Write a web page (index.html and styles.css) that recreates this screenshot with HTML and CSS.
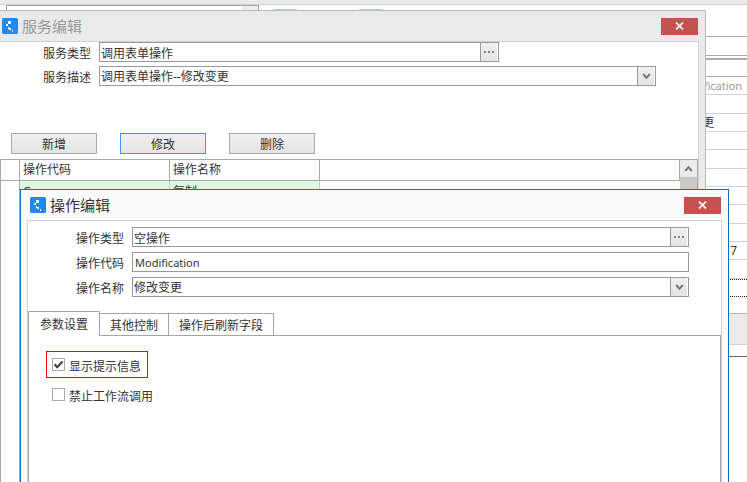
FILE: index.html
```html
<!DOCTYPE html>
<html lang="zh-CN">
<head>
<meta charset="utf-8">
<title>操作编辑</title>
<link rel="stylesheet" href="styles.css">
</head>
<body>
<svg class="defs" aria-hidden="true">
  <symbol id="app" viewBox="0 0 16 16">
    <rect width="16" height="16" rx="1.5" fill="#2488f0"/>
    <path fill="#fff" d="M6 3h3v3H6zM4 6h2v2H4zM6 9h1v1h2v2H7v-1H6zM10 12h1v2h-1z"/>
  </symbol>
  <symbol id="close" viewBox="0 0 9 8">
    <path d="M1 .5 8 7.500M8 .5 1 7.500" fill="none" stroke="#f6eaea" stroke-width="1.800"/>
  </symbol>
  <symbol id="down" viewBox="0 0 9 7">
    <path d="M1.200 1 4.500 4.800 7.800 1" fill="none" stroke="#777" stroke-width="2"/>
  </symbol>
  <symbol id="dots" viewBox="0 0 10 2">
    <path fill="#858585" d="M0 0h2v2H0zM4 0h2v2H4zM8 0h2v2H8z"/>
  </symbol>
</svg>

<main class="desk">
  <div class="toolbar"></div>
  <div class="toolrow"><span class="box"></span><span class="stub"></span><span class="stub second"></span></div>
  <div class="sheet">
    <div class="line head"></div>
    <div class="line panel"></div>
    <div class="line gap"></div>
    <div class="line strong"></div>
    <div class="line muted">Modification</div>
    <div class="line"></div>
    <div class="line name">修改变更</div>
    <div class="line"></div>
    <div class="line"></div>
    <div class="line"></div>
    <div class="line"></div>
    <div class="line"></div>
    <div class="line"></div>
    <div class="line value">7</div>
    <div class="line"></div>
    <div class="line dotted"></div>
    <div class="line blank"></div>
    <div class="line bar"></div>
    <div class="line end"></div>
  </div>
</main>

<section class="window service" aria-labelledby="service-title">
  <header class="titlebar">
    <svg class="logo" aria-hidden="true"><use href="#app"/></svg>
    <h2 class="title" id="service-title">服务编辑</h2>
    <button class="close" aria-label="关闭"><svg><use href="#close"/></svg></button>
  </header>
  <div class="body">
    <div class="form">
      <label class="label" for="stype">服务类型</label>
      <div class="field short"><input id="stype" value="调用表单操作"><button class="end-button" aria-label="浏览"><svg class="dots"><use href="#dots"/></svg></button></div>
      <label class="label" for="sdesc">服务描述</label>
      <div class="field"><select id="sdesc"><option>调用表单操作--修改变更</option></select><span class="end-button over"><svg class="down"><use href="#down"/></svg></span></div>
    </div>
    <div class="actions">
      <button class="button">新增</button>
      <button class="button focus">修改</button>
      <button class="button">删除</button>
    </div>
    <div class="grid">
      <table class="table">
        <thead><tr><th class="mark"></th><th class="col">操作代码</th><th class="col">操作名称</th><th></th></tr></thead>
        <tbody>
          <tr class="row"><td></td><td class="green">Copy</td><td class="green">复制</td><td></td></tr>
          <tr><td></td><td></td><td></td><td></td></tr>
        </tbody>
      </table>
      <div class="scroll"><button class="up" aria-label="向上"><svg class="down"><use href="#down"/></svg></button><div class="thumb"></div></div>
    </div>
  </div>
</section>

<section class="window dialog" aria-labelledby="dialog-title">
  <header class="titlebar">
    <svg class="logo" aria-hidden="true"><use href="#app"/></svg>
    <h2 class="title" id="dialog-title">操作编辑</h2>
    <button class="close" aria-label="关闭"><svg><use href="#close"/></svg></button>
  </header>
  <div class="body">
    <div class="form">
      <label class="label" for="otype">操作类型</label>
      <div class="field"><input id="otype" value="空操作"><button class="end-button" aria-label="浏览"><svg class="dots"><use href="#dots"/></svg></button></div>
      <label class="label" for="ocode">操作代码</label>
      <div class="field"><input id="ocode" class="code" value="Modification"></div>
      <label class="label" for="oname">操作名称</label>
      <div class="field"><select id="oname"><option>修改变更</option></select><span class="end-button over"><svg class="down"><use href="#down"/></svg></span></div>
    </div>
    <div class="tabs" role="tablist">
      <button class="tab active" role="tab" aria-selected="true">参数设置</button>
      <button class="tab" role="tab">其他控制</button>
      <button class="tab" role="tab">操作后刷新字段</button>
    </div>
    <div class="pane" role="tabpanel">
      <label class="check marked"><input type="checkbox" checked><svg class="tick" viewBox="0 0 13 13" aria-hidden="true"><path d="M2.500 6.200 5.200 9.200 10.500 3.500" fill="none" stroke="#444" stroke-width="2.200"/></svg><span>显示提示信息</span></label>
      <label class="check"><input type="checkbox"><span>禁止工作流调用</span></label>
    </div>
  </div>
</section>
</body>
</html>
```

FILE: styles.css
```css
* { box-sizing: border-box; }

body {
  margin: 0;
  height: 100vh;
  overflow: hidden;
  position: relative;
  background: #fff;
  color: #333;
  font: 12px/18px "Noto Sans", "Noto Sans CJK SC", sans-serif;
}

button, input, select {
  margin: 0;
  padding: 0;
  border: 0;
  border-radius: 0;
  font-family: inherit;
  font-size: 12px;
  color: inherit;
  background: none;
}

svg { display: block; }
.defs { position: absolute; width: 0; height: 0; }

/* Main window behind the dialogs */
.toolbar { height: 5px; background: #eaeaea; border-bottom: 1px solid #d2d2d2; }
.toolrow { display: flex; height: 31px; padding-left: 6px; }
.box { width: 253px; border: 1px solid #a5a5a5; border-right-width: 1px; background: linear-gradient(#eee, #eee) right / 17px 100% no-repeat; }
.stub { width: 24px; height: 5px; margin-left: 14px; border-bottom: 1px solid #b4cdda; }
.stub.second { margin-left: 62px; }
.sheet { display: flex; flex-direction: column; }
.line {
  height: 18px;
  padding-right: 5px;
  border-bottom: 1px solid #d2d2d2;
  line-height: 18px;
  text-align: right;
}
.line:nth-child(3n) { height: 19px; }
.line.head { height: 1px; border-color: #aaa; }
.line.panel { height: 19px; border-color: #aaa; }
.line.gap { height: 4px; border-bottom: 2px solid #aaa; }
.line.strong { height: 17px; border-color: #aaa; }
.line.muted { height: 18px; color: #999; font-size: 11px; }
.line.name { padding-right: 33px; }
.line.value { padding-right: 10px; }
.line.dotted { border-bottom: 1px dotted #222; height: 1px; }
.line.blank { height: 17px; border-bottom: 1px dotted #222; }
.line.bar { height: 48px; border-top: 16px solid #fff; background: #eaeaea; box-shadow: inset 0 1px #bbb; }
.line.end { height: 12px; border-color: #666; }

/* Windows */
.window { position: absolute; bottom: 0; display: flex; flex-direction: column; }
.titlebar { display: flex; align-items: center; gap: 4px; height: 30px; }
.logo { width: 16px; height: 16px; }
.title { flex: 1; margin: 0; font-size: 15px; line-height: 20px; font-weight: 400; }
.close {
  display: flex;
  align-items: center;
  justify-content: center;
  width: 37px;
  height: 17px;
  background: #c75050;
}
.close svg { width: 9px; height: 8px; }
.body { flex: 1; display: flex; flex-direction: column; background: #fff; border: 1px solid #d2d2d2; border-bottom: 0; }

.service { top: 10px; left: 0; right: 41px; background: #eaeaea; border: 1px solid #bbb; border-width: 1px 1px 0 0; padding-right: 6px; }
.service .titlebar { padding: 0 1px 0 2px; }
.service .title { color: #999; }
.service .body { border-left: 0; }

.dialog { top: 189px; left: 20px; right: 18px; background: #fafafa; border: 1px solid #0a70be; border-bottom: 0; padding: 0 6px; }
.dialog .titlebar { padding-left: 3px; padding-right: 1px; }

/* Form rows */
.form { display: grid; align-items: center; column-gap: 8px; }
.service .form { grid-template-columns: 91px 1fr; row-gap: 4px; padding-right: 42px; }
.dialog .form { grid-template-columns: 96px 1fr; row-gap: 5px; padding: 6px 32px 0 0; }
.label { text-align: right; padding-top: 4px; line-height: 16px; }
.field {
  display: grid;
  grid-template-columns: 1fr 18px;
  height: 20px;
  border: 1px solid #999;
}
.field.short { margin-right: 157px; }
.field input, .field select {
  grid-area: 1 / 1;
  min-width: 0;
  width: 100%;
  height: 18px;
  padding-left: 1px;
  padding-top: 1px;
  appearance: none;
  outline: 0;
}
.field select, .field .code { grid-column: 1 / 3; }
.field .code { font-size: 11px; padding-left: 2px; }
.end-button {
  grid-area: 1 / 2;
  display: flex;
  align-items: center;
  justify-content: center;
  margin-right: 1px;
  border-left: 1px solid #999;
  background: linear-gradient(#f0f0f0, #e4e4e4);
}
.over { pointer-events: none; }
.dots { width: 10px; height: 2px; }
.down { width: 9px; height: 7px; }

/* Action buttons */
.actions { display: flex; gap: 23px; padding: 47px 11px 5px; }
.button {
  width: 86px;
  height: 21px;
  border: 1px solid #aaa;
  background: linear-gradient(#f0f0f0, #e4e4e4);
}
.focus { border-color: #3c96f5; }

/* Operations list */
.grid { flex: 1; display: flex; border: 1px solid #a9a9a9; border-width: 1px 1px 0; }
.table { flex: 1; height: 100%; border-collapse: separate; border-spacing: 0; table-layout: fixed; }
.table th, .table td { padding: 0 3px; text-align: left; font-weight: 400; border-right: 1px solid #a9a9a9; }
.table th { height: 21px; border-bottom: 1px solid #a9a9a9; }
.table .mark { width: 19px; }
.col { width: 150px; }
.row { height: 21px; }
.table .green { background: #dcfae3; border-right-color: #c9c9c9; }
.table td:last-child { border-right: 0; }
.scroll { width: 17px; background: #eaeaea; }
.up { display: flex; align-items: center; justify-content: center; width: 100%; height: 17px; transform: rotate(180deg); }
.thumb { height: 60px; background: #c9c9c9; }

/* Tabs */
.tabs { display: flex; align-items: flex-start; height: 24px; margin-top: 14px; }
.tab { height: 23px; margin-top: 2px; padding: 0 10px; border: 1px solid #a5a5a5; border-left: 0; background: #fff; }
.tab.active { position: relative; height: 25px; margin-top: 0; padding: 0 11px; border-left: 1px solid #a5a5a5; border-bottom: 0; }
.pane { flex: 1; display: flex; flex-direction: column; align-items: flex-start; gap: 3px; padding: 15px 17px; border: 1px solid #a5a5a5; border-bottom: 0; }
.check { position: relative; display: flex; align-items: center; gap: 4px; height: 27px; padding: 0 6px 0 5px; border: 1px solid transparent; }
.check.marked { border-color: #f00; }
.check input { appearance: none; width: 13px; height: 13px; border: 1px solid #aaa; }
.check span { padding-top: 4px; }
.tick { position: absolute; left: 5px; width: 13px; height: 13px; }
```
